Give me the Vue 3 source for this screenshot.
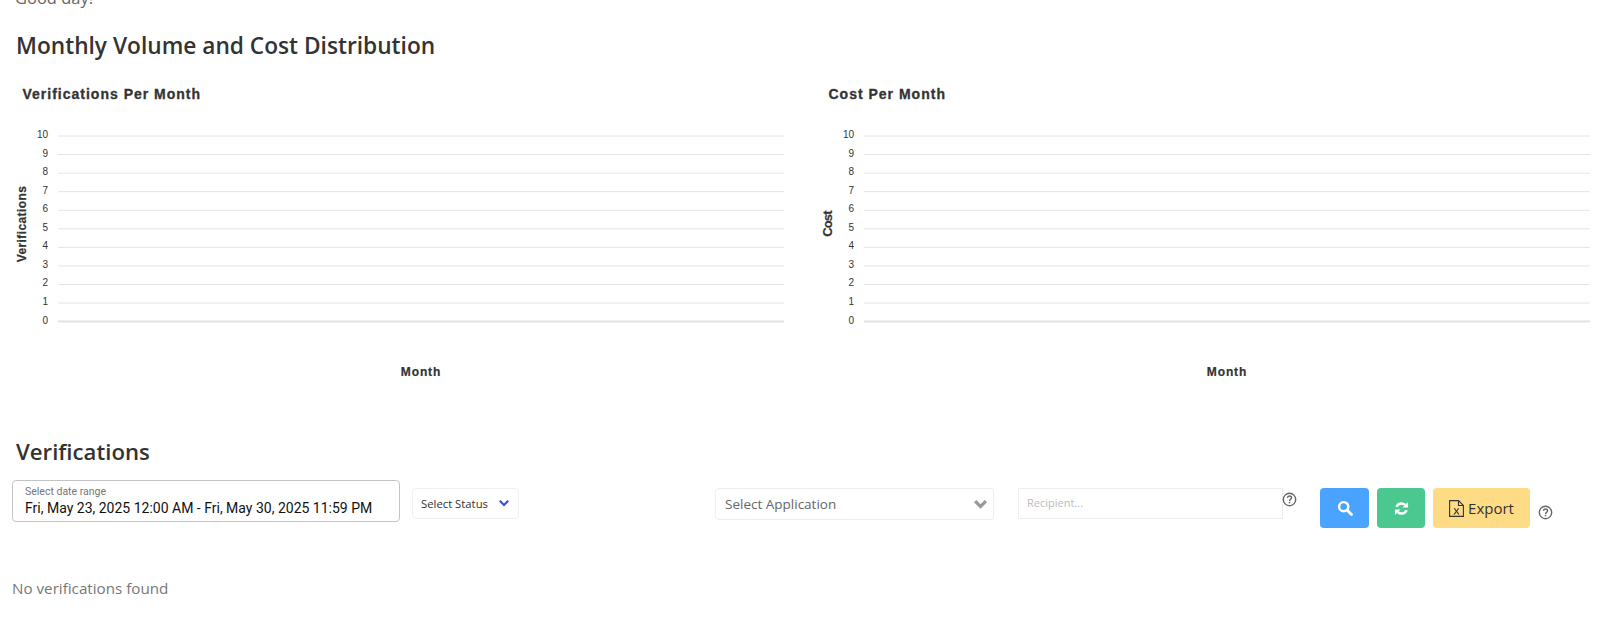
<script setup>
const ticks = [10, 9, 8, 7, 6, 5, 4, 3, 2, 1, 0]
const rowY = (i) => 136 + i * 18.56
const charts = [
  { title: 'Verifications Per Month', axis: 'Verifications', cls: 'axis-long', ax: 26, ay: 224 },
  { title: 'Cost Per Month', axis: 'Cost', cls: 'axis-short', ax: 26, ay: 224 }
]
</script>

<template>
  <div class="page">
    <p class="greeting">Good day!</p>
    <h2 class="heading first">Monthly Volume and Cost Distribution</h2>

    <section class="charts">
      <div v-for="c in charts" :key="c.title" class="chart">
        <svg width="806" height="330" viewBox="0 70 806 330" class="chart-svg">
          <text x="22.500" y="99" class="chart-title">{{ c.title }}</text>
          <text :x="c.ax" :y="c.ay" class="axis-title" :class="c.cls" text-anchor="middle" :transform="`rotate(-90 ${c.ax} ${c.ay})`">{{ c.axis }}</text>
          <g v-for="(t, i) in ticks" :key="t">
            <line x1="58" x2="784" :y1="rowY(i)" :y2="rowY(i)" class="grid" :class="{ base: t === 0 }" />
            <text x="48" :y="rowY(i) + 2" class="tick" text-anchor="end">{{ t }}</text>
          </g>
          <text x="421" y="376" class="axis-title month" text-anchor="middle">Month</text>
        </svg>
      </div>
    </section>

    <h2 class="heading second">Verifications</h2>

    <div class="filters">
      <div class="date-box">
        <span class="date-label">Select date range</span>
        <span class="date-value">Fri, May 23, 2025 12:00 AM - Fri, May 30, 2025 11:59 PM</span>
      </div>

      <div class="status">
        <span>Select Status</span>
        <svg width="12" height="9" viewBox="0 0 12 9"><path d="M1 2.600 2.600 1 6 4.400 9.400 1 11 2.600 6 7.600Z" fill="#3f51c5" /></svg>
      </div>

      <div class="application">
        <span>Select Application</span>
        <svg width="15" height="11" viewBox="0 0 15 11"><path d="M1 3.300 3.300 1 7.500 5.200 11.700 1 14 3.300 7.500 9.800Z" fill="#999" /></svg>
      </div>

      <div class="recipient">Recipient...</div>
      <svg class="help help-a" width="15" height="15" viewBox="0 0 16 16">
        <circle cx="8" cy="8" r="6.600" fill="none" stroke="#666" stroke-width="1.500" />
        <path d="M5.800 6.300C5.900 4.900 6.800 4.300 8 4.300c1.300 0 2.200.8 2.200 1.900 0 1.700-2.200 1.600-2.200 3.300" fill="none" stroke="#666" stroke-width="1.500" />
        <rect x="7.200" y="10.500" width="1.600" height="1.600" fill="#666" />
      </svg>

      <button class="btn search" type="button">
        <svg width="16" height="16" viewBox="0 0 16 16"><circle cx="6.700" cy="6.700" r="4.600" fill="none" stroke="#fff" stroke-width="2.400" /><path d="M10.200 10.200 14.500 14.500" stroke="#fff" stroke-width="2.800" stroke-linecap="round" /></svg>
      </button>
      <button class="btn refresh" type="button">
        <svg width="15" height="15" viewBox="0 0 16 16">
          <path d="M2.600 6.300C3.500 3.900 5.600 2.600 8 2.600c1.600 0 2.900.6 3.900 1.600" fill="none" stroke="#fff" stroke-width="2.600" />
          <path d="M15 1v6H9z" fill="#fff" />
          <path d="M13.400 9.700C12.500 12.100 10.400 13.400 8 13.400c-1.600 0-2.900-.6-3.900-1.600" fill="none" stroke="#fff" stroke-width="2.600" />
          <path d="M1 15V9h6z" fill="#fff" />
        </svg>
      </button>
      <button class="btn export" type="button">
        <svg width="15" height="17" viewBox="0 0 15 17">
          <path d="M.6.600H9.500L14.400 5.500V16.400H.6ZM9.500.600V5.500H14.400" fill="none" stroke="#333" stroke-width="1.100" />
          <path d="M4.600 8.200H6L7.500 10.500 9 8.200h1.400L8.200 11.300 10.600 14.400H9.100L7.500 12.100 5.900 14.400H4.400L6.800 11.300Z" fill="#333" />
        </svg>
        <span>Export</span>
      </button>
      <svg class="help help-b" width="15" height="15" viewBox="0 0 16 16">
        <circle cx="8" cy="8" r="6.600" fill="none" stroke="#666" stroke-width="1.500" />
        <path d="M5.800 6.300C5.900 4.900 6.800 4.300 8 4.300c1.300 0 2.200.8 2.200 1.900 0 1.700-2.200 1.600-2.200 3.300" fill="none" stroke="#666" stroke-width="1.500" />
        <rect x="7.200" y="10.500" width="1.600" height="1.600" fill="#666" />
      </svg>
    </div>

    <p class="empty">No verifications found</p>
  </div>
</template>

<style>
html, body { background: #fff; overflow: hidden; }
</style>

<style scoped>
.page {
  width: 1600px;
  height: 628px;
  overflow: hidden;
  font-family: "Open Sans", "Liberation Sans", sans-serif;
  color: #333;
}
.greeting {
  margin: -12px 0 0 15px;
  height: 20px;
  line-height: 20px;
  font-size: 16.500px;
  color: #666;
}
.heading {
  margin: 0;
  font-weight: 600;
  font-size: 22.700px;
  line-height: 32px;
  color: #333;
}
.first { margin: 22px 0 0 16px; }
.second { margin: 36px 0 0 16px; font-size: 22.200px; }
.charts { display: flex; margin-top: 8px; height: 330px; }
.chart { width: 806px; flex: none; }
.chart-svg { display: block; }
.chart-title {
  font-family: "Liberation Sans", Arial, sans-serif;
  font-weight: 700;
  font-size: 14px;
  letter-spacing: 1px;
  fill: #333;
  stroke: #333;
  stroke-width: 0.3px;
}
.axis-title {
  font-family: "Liberation Sans", Arial, sans-serif;
  font-weight: 700;
  font-size: 12px;
  fill: #333;
  stroke: #333;
  stroke-width: 0.2px;
}
.month { letter-spacing: 0.9px; }
.axis-long { letter-spacing: 0.4px; }
.axis-short { font-size: 13px; letter-spacing: -0.8px; }
.tick {
  font-family: "Liberation Sans", Arial, sans-serif;
  font-size: 10px;
  fill: #333;
}
.grid { stroke: #e4e4e4; stroke-width: 1; }
.grid.base { stroke: #e2e2e2; stroke-width: 2; }
.filters {
  display: flex;
  align-items: flex-start;
  margin-top: 12px;
  padding-left: 12px;
  height: 50px;
}
.date-box {
  box-sizing: border-box;
  width: 388px;
  height: 42px;
  padding: 4px 12px;
  border: 1px solid #c4c4c4;
  border-radius: 4px;
  display: flex;
  flex-direction: column;
  font-family: Roboto, sans-serif;
}
.date-label { font-size: 10.500px; line-height: 13px; color: #777; }
.date-value { font-size: 14px; line-height: 20px; color: #111; white-space: nowrap; }
.status {
  box-sizing: border-box;
  width: 107px;
  height: 31px;
  margin: 8px 0 0 12px;
  padding: 0 8px;
  border: 1px solid #f0f0f0;
  border-radius: 4px;
  display: flex;
  align-items: center;
  justify-content: space-between;
  font-size: 11.300px;
  color: #333;
}
.application {
  box-sizing: border-box;
  width: 279px;
  height: 32px;
  margin: 8px 0 0 196px;
  padding: 0 5px 0 9px;
  border: 1px solid #eee;
  border-radius: 4px;
  display: flex;
  align-items: center;
  justify-content: space-between;
  font-size: 13.500px;
  color: #666;
}
.recipient {
  box-sizing: border-box;
  width: 265px;
  height: 31px;
  margin: 8px 0 0 24px;
  padding: 0 8px;
  border: 1px solid #eee;
  line-height: 28px;
  font-size: 11px;
  color: #bbb;
}
.help { flex: none; }
.help-a { margin: 12px 0 0 -1px; }
.btn {
  box-sizing: border-box;
  height: 40px;
  margin-top: 8px;
  padding: 0;
  border: 0;
  border-radius: 4px;
  display: flex;
  align-items: center;
  justify-content: center;
  flex: none;
}
.search { width: 49px; margin-left: 23px; background: #4aa3ff; }
.refresh { width: 48px; margin-left: 8px; background: #4bc88f; }
.export {
  width: 97px;
  margin-left: 8px;
  gap: 4px;
  background: #fddc85;
  font-family: "Open Sans", sans-serif;
  font-size: 15px;
  color: #333;
}
.help-b { margin: 25px 0 0 8px; }
.empty {
  margin: 48px 0 0 12px;
  font-size: 15.200px;
  line-height: 20px;
  color: #777;
}
</style>
